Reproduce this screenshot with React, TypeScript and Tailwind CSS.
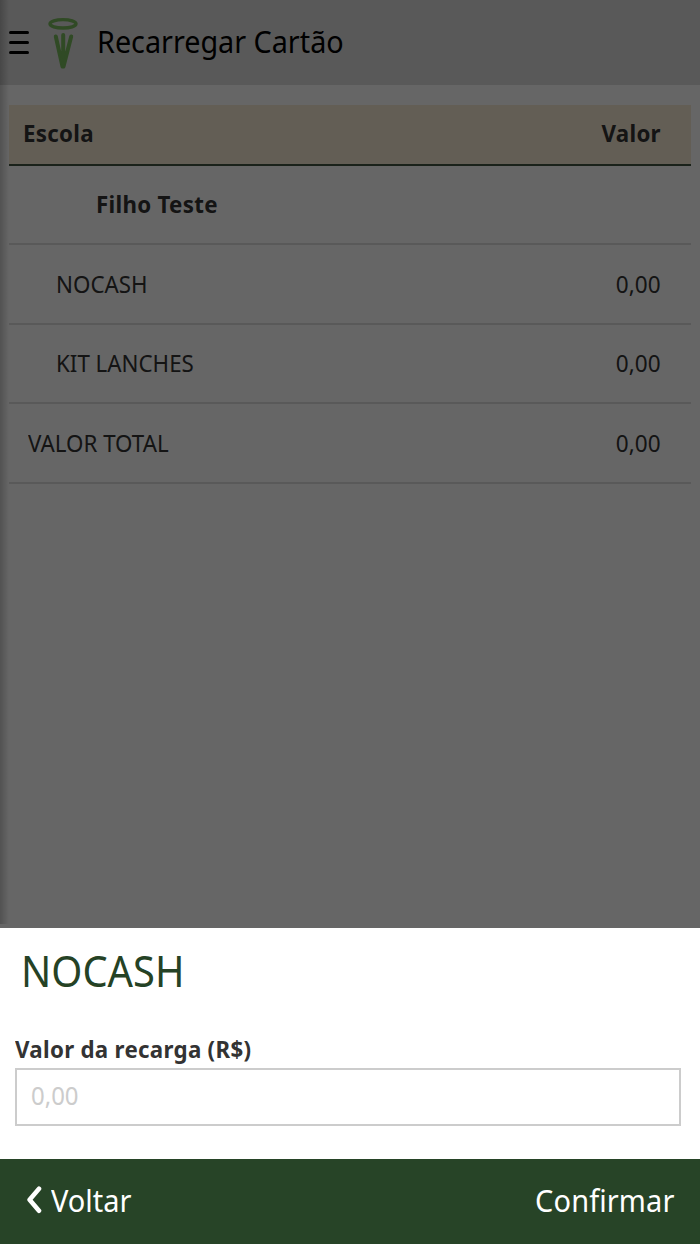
import { useState } from 'react';

const rows = [
  { label: 'NOCASH', value: '0,00', indent: 'pl-[46.5px]' },
  { label: 'KIT LANCHES', value: '0,00', indent: 'pl-[46.5px]' },
  { label: 'VALOR TOTAL', value: '0,00', indent: 'pl-[19px]' },
];

function Logo() {
  return (
    <svg className="mt-[3px] ml-[18px] h-[54px] w-[32px]" viewBox="0 0 32 54" fill="none" stroke="#78b95c" strokeLinecap="round">
      <ellipse cx="16" cy="6.8" rx="13" ry="4.2" strokeWidth="3.4" />
      <path d="M8.8 19.5 L15.5 49.5 M24.2 19.5 L16.5 49.5 M16.2 18 V48" strokeWidth="4" />
      <path d="M13 35 L16 50 L19.5 35 Z" fill="#78b95c" strokeWidth="1.5" />
    </svg>
  );
}

export default function App() {
  const [amount, setAmount] = useState('');

  return (
    <div className="relative flex h-[1244px] w-[700px] flex-col overflow-hidden bg-white font-['Noto_Sans',sans-serif] text-[#333]">
      <div className="relative h-[928px]">
        <header className="flex h-[85px] items-center bg-[#dedede] pb-px pl-[9px]">
          <button className="flex w-5 flex-col gap-[7px]" aria-label="Menu">
            <span className="h-[3px] rounded-full bg-black" />
            <span className="h-[3px] rounded-full bg-black" />
            <span className="h-[3px] rounded-full bg-black" />
          </button>
          <Logo />
          <h1 className="ml-[18px] origin-left scale-x-91 pb-[2px] text-[31.6px] whitespace-nowrap text-black">Recarregar Cartão</h1>
        </header>

        <main className="px-[9px] pt-5">
          <div className="flex h-[61px] items-center justify-between border-b-2 border-[#425542] bg-[#f7ebd5] pr-[30px] pb-[4px] pl-[14px] text-[24px] font-bold tracking-[0.3px]">
            <span className="origin-left scale-x-93">Escola</span>
            <span className="origin-right scale-x-93">Valor</span>
          </div>
          <div className="flex h-[79.4px] items-center border-b-2 border-[#dfdfdf] pb-[2px] pl-[87px] text-[24px] font-bold tracking-[0.3px]">
            <span className="origin-left scale-x-93">Filho Teste</span>
          </div>
          {rows.map((row) => (
            <div
              key={row.label}
              className={`flex h-[79.4px] items-center justify-between border-b-2 border-[#dfdfdf] pr-[30px] pb-[0.6px] text-[24px] ${row.indent}`}
            >
              <span className="origin-left scale-x-93">{row.label}</span>
              <span className="origin-right scale-x-94">{row.value}</span>
            </div>
          ))}
        </main>

        {/* Backdrop */}
        <div className="absolute inset-0 bg-black/60" />
        <div className="absolute top-0 bottom-[4px] left-0 w-[9px] bg-linear-to-r from-black/20 to-transparent" />
      </div>

      {/* Recharge panel */}
      <section className="h-[231px] px-[15px] pt-[13px]">
        <h2 className="ml-[6px] h-[60px] origin-left scale-x-92 text-[43.3px] leading-[60px] text-[#254225]">NOCASH</h2>
        <label className="mt-[30px] block h-[37px] origin-left scale-x-93 text-[24px] leading-[35px] font-bold tracking-[0.3px]">Valor da recarga (R$)</label>
        <div className="h-[58px] w-[666px] border-2 border-[#ccc] px-[14px] pb-[4px]">
          <input
            className="h-full w-full origin-left scale-x-94 text-[25.5px] outline-none placeholder:text-[#ccc]"
            placeholder="0,00"
            value={amount}
            onChange={(e) => setAmount(e.target.value)}
          />
        </div>
      </section>

      <footer className="flex h-[85px] items-center justify-between bg-[#274427] pr-[26px] pb-[4px] pl-[26px] text-[31.5px] text-white">
        <button className="flex items-center">
          <svg className="h-[28px] w-[16px]" viewBox="0 0 16 28" fill="none" stroke="white" strokeWidth="4.6" strokeLinecap="round" strokeLinejoin="round">
            <path d="M13 2.8 L3.6 13.7 L13 24.8" />
          </svg>
          <span className="ml-[9px] origin-left scale-x-92">Voltar</span>
        </button>
        <button className="origin-right scale-x-92 tracking-[0.1px]">Confirmar</button>
      </footer>
    </div>
  );
}
